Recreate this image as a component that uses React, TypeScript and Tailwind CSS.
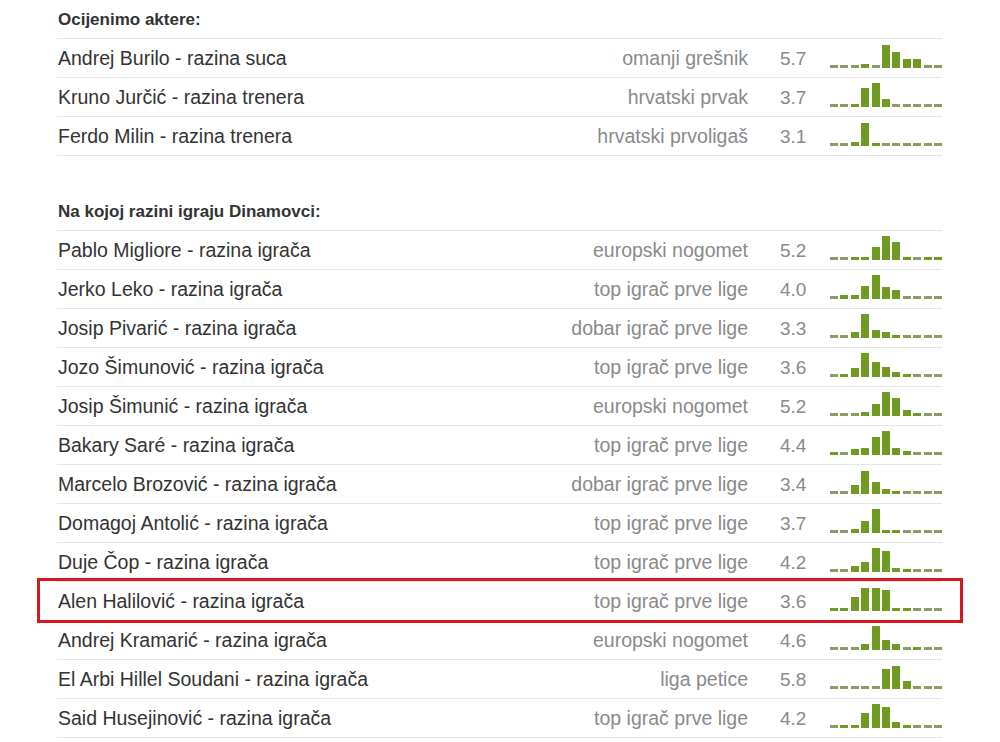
import React from "react";

type Row = { name: string; cat: string; score: string; bars: number[]; hl?: boolean };

const section1: Row[] = [
  { name: "Andrej Burilo - razina suca", cat: "omanji grešnik", score: "5.7", bars: [2, 2, 2, 4, 2, 23, 16, 9, 9, 2, 2] },
  { name: "Kruno Jurčić - razina trenera", cat: "hrvatski prvak", score: "3.7", bars: [2, 2, 3, 19, 24, 8, 2, 2, 2, 2, 2] },
  { name: "Ferdo Milin - razina trenera", cat: "hrvatski prvoligaš", score: "3.1", bars: [2, 2, 4, 23, 3, 2, 2, 2, 2, 2, 2] },
];

const section2: Row[] = [
  { name: "Pablo Migliore - razina igrača", cat: "europski nogomet", score: "5.2", bars: [2, 2, 3, 3, 13, 24, 18, 3, 2, 3, 3] },
  { name: "Jerko Leko - razina igrača", cat: "top igrač prve lige", score: "4.0", bars: [2, 4, 4, 13, 24, 12, 9, 2, 2, 2, 2] },
  { name: "Josip Pivarić - razina igrača", cat: "dobar igrač prve lige", score: "3.3", bars: [2, 2, 6, 24, 8, 6, 3, 2, 2, 2, 2] },
  { name: "Jozo Šimunović - razina igrača", cat: "top igrač prve lige", score: "3.6", bars: [2, 3, 9, 24, 15, 10, 5, 3, 2, 2, 2] },
  { name: "Josip Šimunić - razina igrača", cat: "europski nogomet", score: "5.2", bars: [2, 2, 2, 4, 12, 24, 18, 6, 3, 2, 2] },
  { name: "Bakary Saré - razina igrača", cat: "top igrač prve lige", score: "4.4", bars: [3, 2, 6, 7, 18, 24, 7, 4, 2, 2, 2] },
  { name: "Marcelo Brozović - razina igrača", cat: "dobar igrač prve lige", score: "3.4", bars: [2, 2, 9, 23, 12, 5, 3, 2, 2, 2, 2] },
  { name: "Domagoj Antolić - razina igrača", cat: "top igrač prve lige", score: "3.7", bars: [2, 2, 4, 12, 24, 3, 3, 2, 2, 2, 2] },
  { name: "Duje Čop - razina igrača", cat: "top igrač prve lige", score: "4.2", bars: [2, 2, 6, 10, 24, 21, 4, 3, 2, 2, 2] },
  { name: "Alen Halilović - razina igrača", cat: "top igrač prve lige", score: "3.6", bars: [3, 3, 14, 23, 23, 21, 3, 3, 2, 2, 2], hl: true },
  { name: "Andrej Kramarić - razina igrača", cat: "europski nogomet", score: "4.6", bars: [2, 2, 2, 6, 24, 10, 6, 2, 3, 2, 2] },
  { name: "El Arbi Hillel Soudani - razina igrača", cat: "liga petice", score: "5.8", bars: [2, 2, 2, 2, 2, 20, 23, 8, 2, 2, 2] },
  { name: "Said Husejinović - razina igrača", cat: "top igrač prve lige", score: "4.2", bars: [2, 3, 3, 15, 24, 21, 6, 3, 2, 2, 2] },
];

function Chart({ bars }: { bars: number[] }) {
  return (
    <div className="ml-[22px] mb-[5px] flex h-[24px] w-[114px] items-end gap-[2.5px] pl-[2px]">
      {bars.map((h, i) => (
        <div
          key={i}
          className={h <= 2 ? "w-[8px] bg-[#8c9a66]" : "w-[8px] bg-[#6f9b22]"}
          style={{ height: `${h <= 2 ? 2.5 : h}px` }}
        />
      ))}
    </div>
  );
}

function RowItem({ r }: { r: Row }) {
  return (
    <div className="relative flex h-[39px] items-center border-b border-[#e6e6e6]">
      <div className="flex-1 pl-[1px] pt-[2px] text-[19.5px] text-[#333333]">{r.name}</div>
      <div className="pt-[2px] text-right text-[19.5px] text-[#8a8a8a]">{r.cat}</div>
      <div className="ml-[32px] w-[26px] pt-[2px] text-[19px] text-[#8a8a8a]">{r.score}</div>
      <Chart bars={r.bars} />
      {r.hl && (
        <div className="pointer-events-none absolute -top-[4px] -bottom-[3px] -left-[20px] -right-[21px] border-[3px] border-[#d7161f]" />
      )}
    </div>
  );
}

function Header({ text, first }: { text: string; first?: boolean }) {
  return (
    <div
      className={
        (first ? "" : "mt-[36px] ") +
        "flex h-[39px] items-center border-b border-[#e6e6e6] pl-[1px] pt-[2px] text-[17px] font-bold text-[#333333]"
      }
    >
      {text}
    </div>
  );
}

export default function App() {
  return (
    <div
      className="h-[742px] w-[1000px] overflow-hidden bg-white"
      style={{ fontFamily: '"Liberation Sans", Arial, sans-serif' }}
    >
      <div className="ml-[57px] w-[885px]">
        <Header text="Ocijenimo aktere:" first />
        {section1.map((r) => (
          <RowItem key={r.name} r={r} />
        ))}
        <Header text="Na kojoj razini igraju Dinamovci:" />
        {section2.map((r) => (
          <RowItem key={r.name} r={r} />
        ))}
      </div>
    </div>
  );
}
